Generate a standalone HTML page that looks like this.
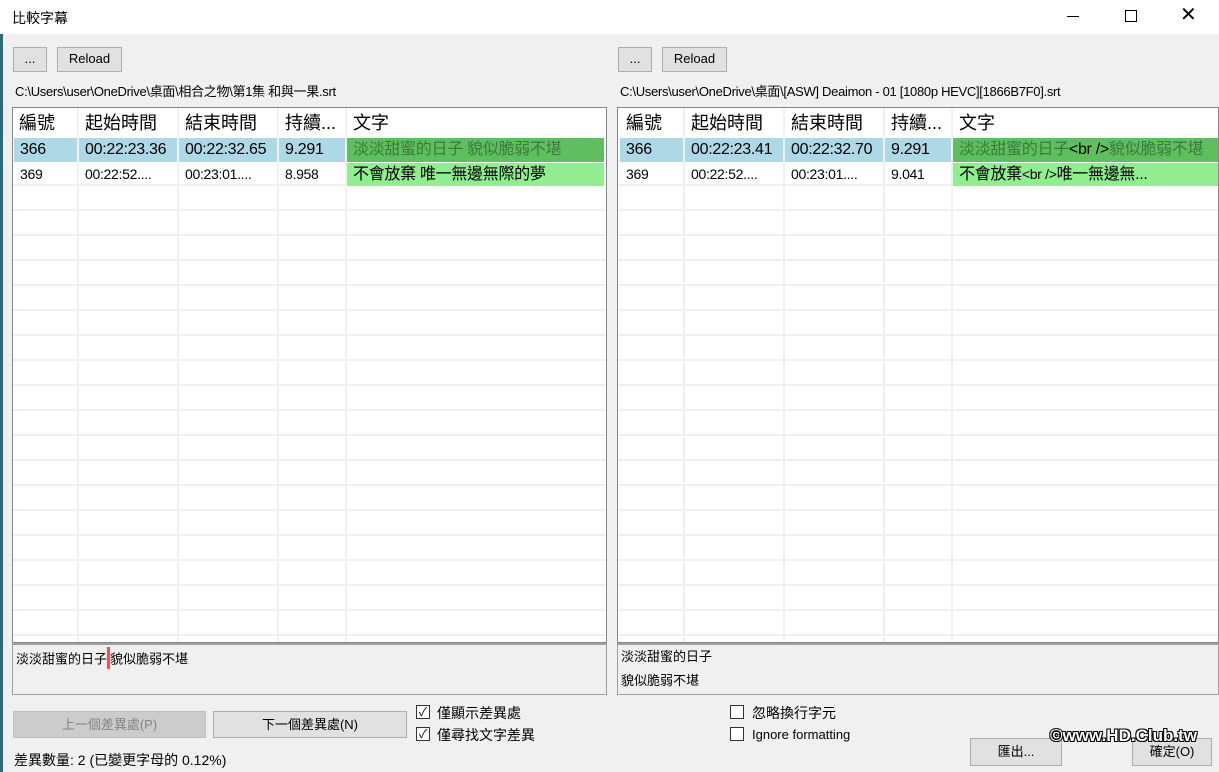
<!DOCTYPE html>
<html><head><meta charset="utf-8"><style>
*{margin:0;padding:0;box-sizing:border-box}
body{width:1219px;height:772px;background:#f0f0f0;font-family:"Liberation Sans","Noto Sans CJK TC",sans-serif;font-size:13px;color:#000;position:relative;overflow:hidden}
.abs{position:absolute}
.title{left:0;top:0;width:1219px;height:34px;background:#fff}
.btn{position:absolute;background:#e1e1e1;border:1px solid #adadad;text-align:center;font-size:13px;line-height:22px}
.list{position:absolute;background:#fff;border:1px solid #828790;overflow:hidden}
.rows{position:absolute;left:0;right:0;top:28px;bottom:0;background:repeating-linear-gradient(to bottom,#fff 0,#fff 23px,#f0f0f0 23px,#f0f0f0 25px)}
.col{position:absolute;top:0;bottom:0;width:2px;background:#f0f0f0}
.cell{position:absolute;white-space:nowrap;overflow:hidden;font-size:16px;padding-left:6px;letter-spacing:-0.3px}
.hd{font-size:18px;top:2px;height:26px;line-height:26px;letter-spacing:0}
.r1{top:30px;height:24px;line-height:24px;background:#add8e6}
.r2{top:55px;height:23px;line-height:23px;font-size:14px}
.g1{background:#5fbf5f;color:#3a7a3a}
.g2{background:#90ee90}
.tb{position:absolute;border:1px solid #a0a0a0;border-top:2px solid #a0a0a0;background:#f0f0f0;font-size:13px;padding:6px 3px;line-height:24px}
.cb{position:absolute;width:14px;height:14px;border:1px solid #333;background:#fff;font-size:12px;line-height:12px;text-align:center}
.lbl{position:absolute;font-size:14px}
</style></head><body>
<div class="abs" style="left:0;top:34px;width:3px;height:738px;background:#2a6a80"></div>
<div class="abs title"></div>
<div class="abs" style="left:12px;top:8px;font-size:14px">比較字幕</div>
<div class="abs" style="left:1067px;top:16px;width:12px;height:1px;background:#000"></div>
<div class="abs" style="left:1125px;top:10px;width:12px;height:12px;border:1px solid #000"></div>
<div class="abs" style="left:1180px;top:2px;font-size:20px;font-weight:300">✕</div>

<div class="btn" style="left:13px;top:47px;width:34px;height:25px">...</div>
<div class="btn" style="left:57px;top:47px;width:65px;height:25px">Reload</div>
<div class="abs" style="left:15px;top:81px;font-size:13px;letter-spacing:-0.3px">C:\Users\user\OneDrive\桌面\相合之物\第1集 和與一果.srt</div>
<div class="btn" style="left:618px;top:47px;width:34px;height:25px">...</div>
<div class="btn" style="left:662px;top:47px;width:65px;height:25px">Reload</div>
<div class="abs" style="left:620px;top:81px;font-size:13px;letter-spacing:-0.3px">C:\Users\user\OneDrive\桌面\[ASW] Deaimon - 01 [1080p HEVC][1866B7F0].srt</div>

<div class="list" style="left:12px;top:107px;width:595px;height:536px">
<div class="rows"></div>
<div class="col" style="left:64px"></div><div class="col" style="left:164px"></div><div class="col" style="left:264px"></div><div class="col" style="left:332px"></div>
<div class="cell hd" style="left:0">編號</div><div class="cell hd" style="left:66px">起始時間</div><div class="cell hd" style="left:166px">結束時間</div><div class="cell hd" style="left:266px">持續...</div><div class="cell hd" style="left:334px">文字</div>
<div class="cell r1" style="left:1px;width:63px">366</div><div class="cell r1" style="left:66px;width:98px">00:22:23.36</div><div class="cell r1" style="left:166px;width:98px">00:22:32.65</div><div class="cell r1" style="left:266px;width:66px">9.291</div><div class="cell r1 g1" style="left:334px;width:257px">淡淡甜蜜的日子 貌似脆弱不堪</div>
<div class="cell r2" style="left:1px">369</div><div class="cell r2" style="left:66px">00:22:52....</div><div class="cell r2" style="left:166px">00:23:01....</div><div class="cell r2" style="left:266px">8.958</div><div class="cell r2 g2" style="left:334px;width:257px;font-size:16px">不會放棄 唯一無邊無際的夢</div>
</div>
<div class="list" style="left:617px;top:107px;width:602px;height:536px">
<div class="rows"></div>
<div class="col" style="left:65px"></div><div class="col" style="left:165px"></div><div class="col" style="left:265px"></div><div class="col" style="left:333px"></div>
<div class="cell hd" style="left:2px">編號</div><div class="cell hd" style="left:67px">起始時間</div><div class="cell hd" style="left:167px">結束時間</div><div class="cell hd" style="left:267px">持續...</div><div class="cell hd" style="left:335px">文字</div>
<div class="cell r1" style="left:2px;width:63px">366</div><div class="cell r1" style="left:67px;width:98px">00:22:23.41</div><div class="cell r1" style="left:167px;width:98px">00:22:32.70</div><div class="cell r1" style="left:267px;width:66px">9.291</div><div class="cell r1 g1" style="left:335px;width:267px">淡淡甜蜜的日子<span style="color:#000">&lt;br /&gt;</span>貌似脆弱不堪</div>
<div class="cell r2" style="left:2px">369</div><div class="cell r2" style="left:67px">00:22:52....</div><div class="cell r2" style="left:167px">00:23:01....</div><div class="cell r2" style="left:267px">9.041</div><div class="cell r2 g2" style="left:335px;width:267px;font-size:16px">不會放棄<span style="font-size:14px">&lt;br /&gt;</span>唯一無邊無...</div>
</div>

<div class="tb" style="left:12px;top:643px;width:595px;height:52px;line-height:16px">淡淡甜蜜的日子<span style="display:inline-block;width:3px;height:22px;background:#f05050;vertical-align:middle;margin-top:-4px"></span>貌似脆弱不堪</div>
<div class="tb" style="left:617px;top:643px;width:602px;height:52px;line-height:24px;padding-top:0">淡淡甜蜜的日子<br>貌似脆弱不堪</div>

<div class="btn" style="left:13px;top:711px;width:193px;height:27px;line-height:25px;color:#838383;background:#cccccc;border-color:#bfbfbf">上一個差異處(P)</div>
<div class="btn" style="left:213px;top:711px;width:194px;height:27px;line-height:25px">下一個差異處(N)</div>
<div class="cb" style="left:416px;top:705px">✓</div><div class="lbl" style="left:437px;top:703px">僅顯示差異處</div>
<div class="cb" style="left:416px;top:727px">✓</div><div class="lbl" style="left:437px;top:725px">僅尋找文字差異</div>
<div class="cb" style="left:730px;top:705px"></div><div class="lbl" style="left:752px;top:703px">忽略換行字元</div>
<div class="cb" style="left:730px;top:727px"></div><div class="lbl" style="left:752px;top:727px;font-size:13px">Ignore formatting</div>
<div class="lbl" style="left:14px;top:750px;font-size:14px">差異數量: 2 (已變更字母的 0.12%)</div>
<div class="btn" style="left:970px;top:738px;width:92px;height:28px;line-height:26px">匯出...</div>
<div class="btn" style="left:1132px;top:738px;width:80px;height:28px;line-height:26px">確定(O)</div>
<div class="abs" style="left:1050px;top:726px;font-size:17px;font-weight:bold;color:#fff;text-shadow:-1px -1px 0 #000,1px -1px 0 #000,-1px 1px 0 #000,1px 1px 0 #000">©www.HD.Club.tw</div>
</body></html>
